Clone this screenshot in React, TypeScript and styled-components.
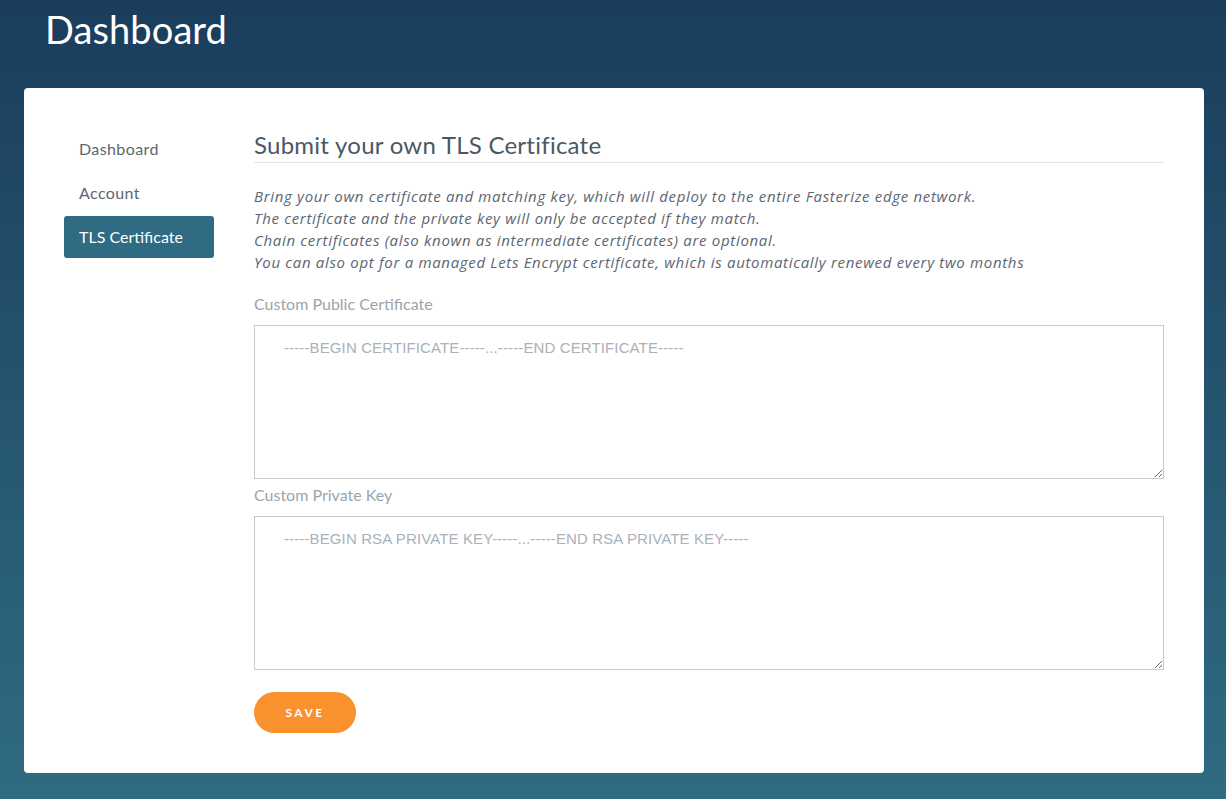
import React from 'react'
import styled, { createGlobalStyle } from 'styled-components'

const GlobalStyle = createGlobalStyle`
  html, body {
    margin: 0;
    padding: 0;
  }
  body {
    min-height: 799px;
    background: linear-gradient(180deg, #1a3d5c 0%, #25546f 50%, #2f6b82 100%);
    font-family: Lato, "Noto Sans", sans-serif;
  }
`

const Page = styled.div`
  padding: 0 22px 27px 24px;
`

const PageTitle = styled.h1`
  margin: 0;
  padding: 6px 0 0 21px;
  height: 88px;
  box-sizing: border-box;
  font-size: 38px;
  font-weight: 400;
  color: #fff;
  letter-spacing: 0.1px;
`

const Card = styled.div`
  background: #fff;
  border-radius: 4px;
  display: flex;
  padding: 40px;
  gap: 40px;
  min-height: 684px;
  box-sizing: border-box;
`

const Nav = styled.nav`
  width: 150px;
  flex-shrink: 0;
  display: flex;
  flex-direction: column;
  gap: 2px;
`

const NavItem = styled.a<{ $active?: boolean }>`
  display: block;
  height: 42px;
  line-height: 42px;
  padding: 0 15px;
  border-radius: 3px;
  font-size: 16px;
  letter-spacing: ${(p) => (p.$active ? '0' : '0.4px')};
  color: ${(p) => (p.$active ? '#fff' : '#5c6670')};
  background: ${(p) => (p.$active ? '#2f6b82' : 'transparent')};
  cursor: pointer;
`

const Main = styled.main`
  flex: 1;
  max-width: 910px;
`

const Heading = styled.h2`
  margin: 0;
  font-size: 24px;
  font-weight: 400;
  letter-spacing: 0.25px;
  color: #4a5866;
  line-height: 34px;
  border-bottom: 1px solid #e2e4e6;
`

const Intro = styled.p`
  margin: 22px 0 0;
  font-family: "Open Sans", "Noto Sans", sans-serif;
  font-size: 15px;
  line-height: 22px;
  letter-spacing: 0.68px;
  font-style: italic;
  color: #5c6670;
`

const Label = styled.label`
  display: block;
  margin: 20px 0 10px;
  font-size: 16px;
  line-height: 22px;
  color: #9aa4ad;
`

const FieldLabel = styled(Label)`
  margin-top: 5px;
`

const TextArea = styled.textarea`
  display: block;
  width: 100%;
  height: 154px;
  box-sizing: border-box;
  border: 1px solid #c9c9c9;
  border-radius: 0;
  padding: 12px 29px;
  font-family: "Liberation Sans", Arial, sans-serif;
  font-size: 15px;
  line-height: 20px;
  letter-spacing: 0.12px;
  color: #444;
  resize: vertical;
  outline: none;
  &::placeholder {
    color: #a9b1b9;
  }
`

const SaveButton = styled.button`
  margin-top: 22px;
  width: 102px;
  height: 41px;
  border: none;
  border-radius: 21px;
  background: #f8912e;
  color: #fff;
  font-family: Lato, "Noto Sans", sans-serif;
  font-size: 12px;
  font-weight: 700;
  letter-spacing: 2.4px;
  cursor: pointer;
`

export default function App() {
  return (
    <>
      <GlobalStyle />
      <Page>
        <PageTitle>Dashboard</PageTitle>
        <Card>
          <Nav>
            <NavItem>Dashboard</NavItem>
            <NavItem>Account</NavItem>
            <NavItem $active>TLS Certificate</NavItem>
          </Nav>
          <Main>
            <Heading>Submit your own TLS Certificate</Heading>
            <Intro>
              Bring your own certificate and matching key, which will deploy to the entire Fasterize edge network.
              <br />
              The certificate and the private key will only be accepted if they match.
              <br />
              Chain certificates (also known as intermediate certificates) are optional.
              <br />
              You can also opt for a managed Lets Encrypt certificate, which is automatically renewed every two months
            </Intro>
            <Label>Custom Public Certificate</Label>
            <TextArea placeholder="-----BEGIN CERTIFICATE-----...-----END CERTIFICATE-----" />
            <FieldLabel>Custom Private Key</FieldLabel>
            <TextArea placeholder="-----BEGIN RSA PRIVATE KEY-----...-----END RSA PRIVATE KEY-----" />
            <SaveButton>SAVE</SaveButton>
          </Main>
        </Card>
      </Page>
    </>
  )
}
